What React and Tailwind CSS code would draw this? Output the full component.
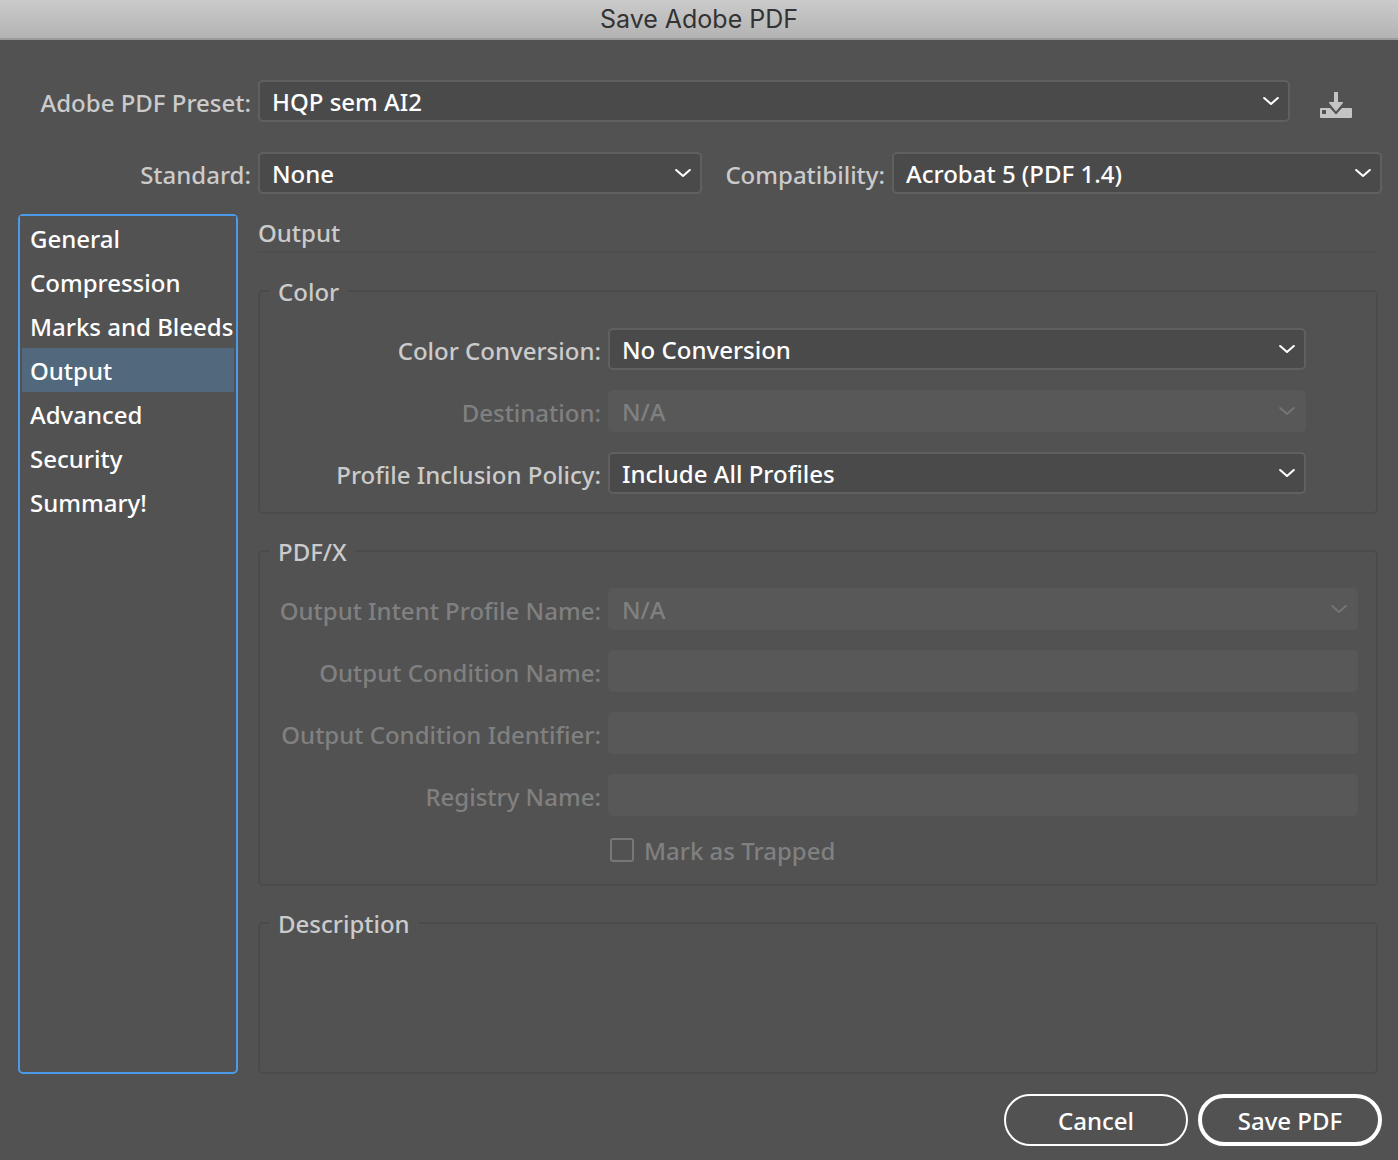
import { useState } from 'react';
import clsx from 'clsx';

const SECTIONS = ['General', 'Compression', 'Marks and Bleeds', 'Output', 'Advanced', 'Security', 'Summary!'];

const Chevron = ({ className }) => (
  <svg viewBox="0 0 16 10" className={clsx('pointer-events-none absolute right-[11px] top-4 w-4 h-[10px]', className)} fill="none">
    <path d="M1.2 2 L8 8 L14.8 2" stroke="currentColor" strokeWidth="2.1" strokeLinecap="round" strokeLinejoin="round" />
  </svg>
);

const Select = ({ id, options, disabled, className }) => (
  <div className={clsx('relative min-w-0', className)}>
    <select
      id={id}
      disabled={disabled}
      className={clsx(
        'block w-full h-[42px] appearance-none rounded-[5px] border-2 pt-0.5 pl-3 pr-10 opacity-100',
        disabled
          ? 'bg-[#585858] border-[#585858] text-[#808080]'
          : 'bg-[#4a4a4a] border-[#606060] text-white'
      )}
    >
      {options.map((o) => <option key={o}>{o}</option>)}
    </select>
    <Chevron className={disabled ? 'text-[#747474]' : 'text-white'} />
  </div>
);

const Label = ({ htmlFor, disabled, className, children }) => (
  <label
    htmlFor={htmlFor}
    className={clsx('shrink-0 text-right whitespace-nowrap', disabled ? 'text-[#808080]' : 'text-[#cbcbcb]', className)}
  >
    {children}
  </label>
);

const Row = ({ id, label, disabled, children }) => (
  <div className="flex items-center gap-[7px]">
    <Label htmlFor={id} disabled={disabled} className="w-[341px] pt-1">{label}</Label>
    {children}
  </div>
);

const Group = ({ title, className, children }) => (
  <fieldset className={clsx('min-w-0 rounded-[5px] border-2 border-[#4b4b4b] pt-[22px]', className)}>
    <legend className="ml-[10px] px-2 pt-0.5 leading-7 text-[#cbcbcb]">{title}</legend>
    {children}
  </fieldset>
);

const TextInput = ({ id }) => (
  <input id={id} type="text" disabled className="min-w-0 flex-1 h-[42px] rounded-[5px] bg-[#585858] px-3 text-[#808080]" />
);

const SaveIcon = () => (
  <svg viewBox="0 0 32 26" className="w-8 h-[26px]" fill="currentColor">
    <path d="M14 0h4v10h4.500q1 .3.400 1.100L16 19.500 9.100 11.100Q8.500 10.300 9.500 10H14z" />
    <path fillRule="evenodd" d="M1 16h9l6 6.500 6-6.500h9a1 1 0 0 1 1 1v8a1 1 0 0 1-1 1H1a1 1 0 0 1-1-1v-8a1 1 0 0 1 1-1zM2.500 18h3a.5.5 0 0 1 .5.5v3a.5.5 0 0 1-.5.5h-3a.5.5 0 0 1-.5-.5v-3a.5.5 0 0 1 .5-.5z" />
  </svg>
);

const App = () => {
  const [active, setActive] = useState('Output');

  return (
    <div className="min-h-screen flex flex-col bg-[#525252] text-2xl leading-7 font-medium font-['Noto_Sans',sans-serif]">
      <header className="h-10 flex items-center justify-center border-b-2 border-[#9a9a9a] bg-linear-to-b from-[#cbcbcb] to-[#b3b3b3]">
        <h1 className="font-['Inter',sans-serif] text-[25px] font-normal text-[#333333]">Save Adobe PDF</h1>
      </header>

      {/* Preset */}
      <div className="mt-10 flex items-center gap-[7px] pr-[46px]">
        <Label htmlFor="preset" className="w-[251px] pt-1">Adobe PDF Preset:</Label>
        <Select id="preset" options={['HQP sem AI2']} className="flex-1" />
        <button type="button" aria-label="Save preset" className="ml-[23px] pt-2 text-[#c4c4c4]">
          <SaveIcon />
        </button>
      </div>

      {/* Standard and compatibility */}
      <div className="mt-[30px] flex items-center gap-[7px] pr-4">
        <Label htmlFor="standard" className="w-[251px] pt-1">Standard:</Label>
        <Select id="standard" options={['None']} className="flex-[444]" />
        <Label htmlFor="compat" className="w-[176px] pt-1">Compatibility:</Label>
        <Select id="compat" options={['Acrobat 5 (PDF 1.4)']} className="flex-[490]" />
      </div>

      <div className="mt-5 flex-1 flex gap-5 pl-[18px] pr-5">
        <nav className="w-[220px] shrink-0 rounded-[5px] border-2 border-[#4a9bea]">
          {SECTIONS.map((name) => (
            <button
              key={name}
              type="button"
              onClick={() => setActive(name)}
              className={clsx(
                'block w-full h-11 border-x-2 border-[#525252] pt-0.5 px-2 text-left text-white whitespace-nowrap',
                name === active && 'bg-[#51687d]'
              )}
            >
              {name}
            </button>
          ))}
        </nav>

        <main className="flex-1 min-w-0 flex flex-col">
          <h2 className="h-[39px] flex items-center border-b-2 border-[#4e4e4e] text-[#cbcbcb]">Output</h2>

          <Group title="Color" className="mt-[23px] pr-[70px] pb-[18px]">
            <div className="flex flex-col gap-5">
              <Row id="conversion" label="Color Conversion:">
                <Select id="conversion" options={['No Conversion']} className="flex-1" />
              </Row>
              <Row id="destination" label="Destination:" disabled>
                <Select id="destination" options={['N/A']} disabled className="flex-1" />
              </Row>
              <Row id="policy" label="Profile Inclusion Policy:">
                <Select id="policy" options={['Include All Profiles']} className="flex-1" />
              </Row>
            </div>
          </Group>

          <Group title="PDF/X" className="mt-[22px] pr-[18px] pb-5">
            <div className="flex flex-col gap-5">
              <Row id="intent" label="Output Intent Profile Name:" disabled>
                <Select id="intent" options={['N/A']} disabled className="flex-1" />
              </Row>
              <Row id="condition" label="Output Condition Name:" disabled>
                <TextInput id="condition" />
              </Row>
              <Row id="identifier" label="Output Condition Identifier:" disabled>
                <TextInput id="identifier" />
              </Row>
              <Row id="registry" label="Registry Name:" disabled>
                <TextInput id="registry" />
              </Row>
              <div className="flex items-center gap-[10px] h-7 pl-[350px]">
                <input id="trapped" type="checkbox" disabled className="appearance-none w-6 h-6 rounded-[3px] border-2 border-[#777777]" />
                <Label htmlFor="trapped" disabled className="pt-0.5">Mark as Trapped</Label>
              </div>
            </div>
          </Group>

          <Group title="Description" className="mt-[22px] flex-1 min-h-[166px]" />
        </main>
      </div>

      <footer className="mt-5 flex justify-end gap-[10px] pr-4 pb-[14px] text-white">
        <button type="button" className="w-[184px] h-[52px] rounded-full border-2 border-white pt-0.5">Cancel</button>
        <button type="button" className="w-[184px] h-[52px] rounded-full border-4 border-white pt-0.5">Save PDF</button>
      </footer>
    </div>
  );
};

export default App;
